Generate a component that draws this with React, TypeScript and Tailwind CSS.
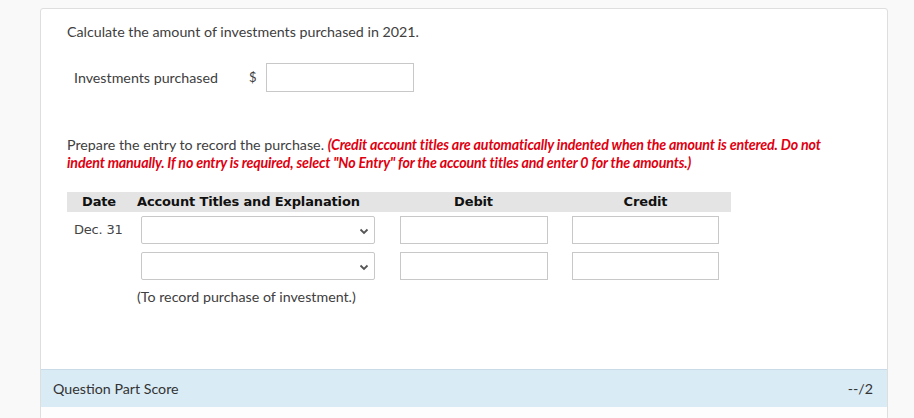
import React from "react";

function Chevron() {
  return (
    <svg width="10" height="7" viewBox="0 0 10 7" className="absolute right-[5px] top-[11px]">
      <path d="M1.5 1.5 L5 5 L8.5 1.5" fill="none" stroke="#555" strokeWidth="1.8" />
    </svg>
  );
}

function Select() {
  return (
    <div className="relative w-[234px] h-[28px] border border-[#c8c8c8] rounded-[2px] bg-white">
      <Chevron />
    </div>
  );
}

function Box({ w }: { w: string }) {
  return <div className={`${w} h-[28px] border border-[#c8c8c8] bg-white`} />;
}

export default function App() {
  return (
    <div className="w-[914px] h-[418px] overflow-hidden bg-[#f9f9f9] pt-[8px] font-['Lato','Liberation_Sans',sans-serif] text-[#404040]">
      <div className="ml-[40px] w-[848px] bg-white border border-[#dedede] rounded-[3px]">
        <div className="pl-[26px] pt-[13px] pb-[63px]">
          <p className="text-[14.25px] leading-[20px]">Calculate the amount of investments purchased in 2021.</p>
          <div className="mt-[21px] flex items-center h-[29px]">
            <span className="ml-[7px] w-[175px] text-[14.25px]">Investments purchased</span>
            <span className="text-[13px] w-[17px]">$</span>
            <div className="w-[148px] h-[29px] border border-[#c8c8c8] bg-white" />
          </div>
          <p className="mt-[44px] text-[14.25px] leading-[18px] whitespace-nowrap">
            Prepare the entry to record the purchase.{" "}
            <span className="text-[#e00010] italic font-bold tracking-[-0.16px]">
              (Credit account titles are automatically indented when the amount is entered. Do not
              <br />
              indent manually. If no entry is required, select "No Entry" for the account titles and enter 0 for the amounts.)
            </span>
          </p>
          <div className="mt-[20px] w-[664px] h-[20px] bg-[#e4e4e4] flex items-center font-['DejaVu_Sans',sans-serif] font-bold text-[13px] tracking-[-0.15px] text-[#111]">
            <div className="w-[64px] text-center">Date</div>
            <div className="w-[256px] pl-[6px]">Account Titles and Explanation</div>
            <div className="w-[173px] text-center">Debit</div>
            <div className="w-[171px] text-center">Credit</div>
          </div>
          <div className="mt-[4px] flex h-[28px] items-center">
            <div className="w-[64px] pl-[7px] font-['DejaVu_Sans',sans-serif] text-[13px] tracking-[-0.2px] text-[#444]">Dec. 31</div>
            <div className="w-[256px] pl-[10px]"><Select /></div>
            <div className="w-[173px] pl-[13px]"><Box w="w-[148px]" /></div>
            <div className="w-[171px] pl-[12px]"><Box w="w-[147px]" /></div>
          </div>
          <div className="mt-[8px] flex h-[28px] items-center">
            <div className="w-[64px]" />
            <div className="w-[256px] pl-[10px]"><Select /></div>
            <div className="w-[173px] pl-[13px]"><Box w="w-[148px]" /></div>
            <div className="w-[171px] pl-[12px]"><Box w="w-[147px]" /></div>
          </div>
          <p className="mt-[8px] ml-[70px] text-[14.25px] leading-[18px]">(To record purchase of investment.)</p>
        </div>
        <div className="h-[38px] bg-[#d9ebf5] border-t border-[#c9dbe6] flex items-center justify-between pl-[12px] pr-[14px] text-[14.25px] text-[#333]">
          <span>Question Part Score</span>
          <span>--/2</span>
        </div>
        <div className="h-[12px] bg-[#fdfdfd]" />
      </div>
    </div>
  );
}
